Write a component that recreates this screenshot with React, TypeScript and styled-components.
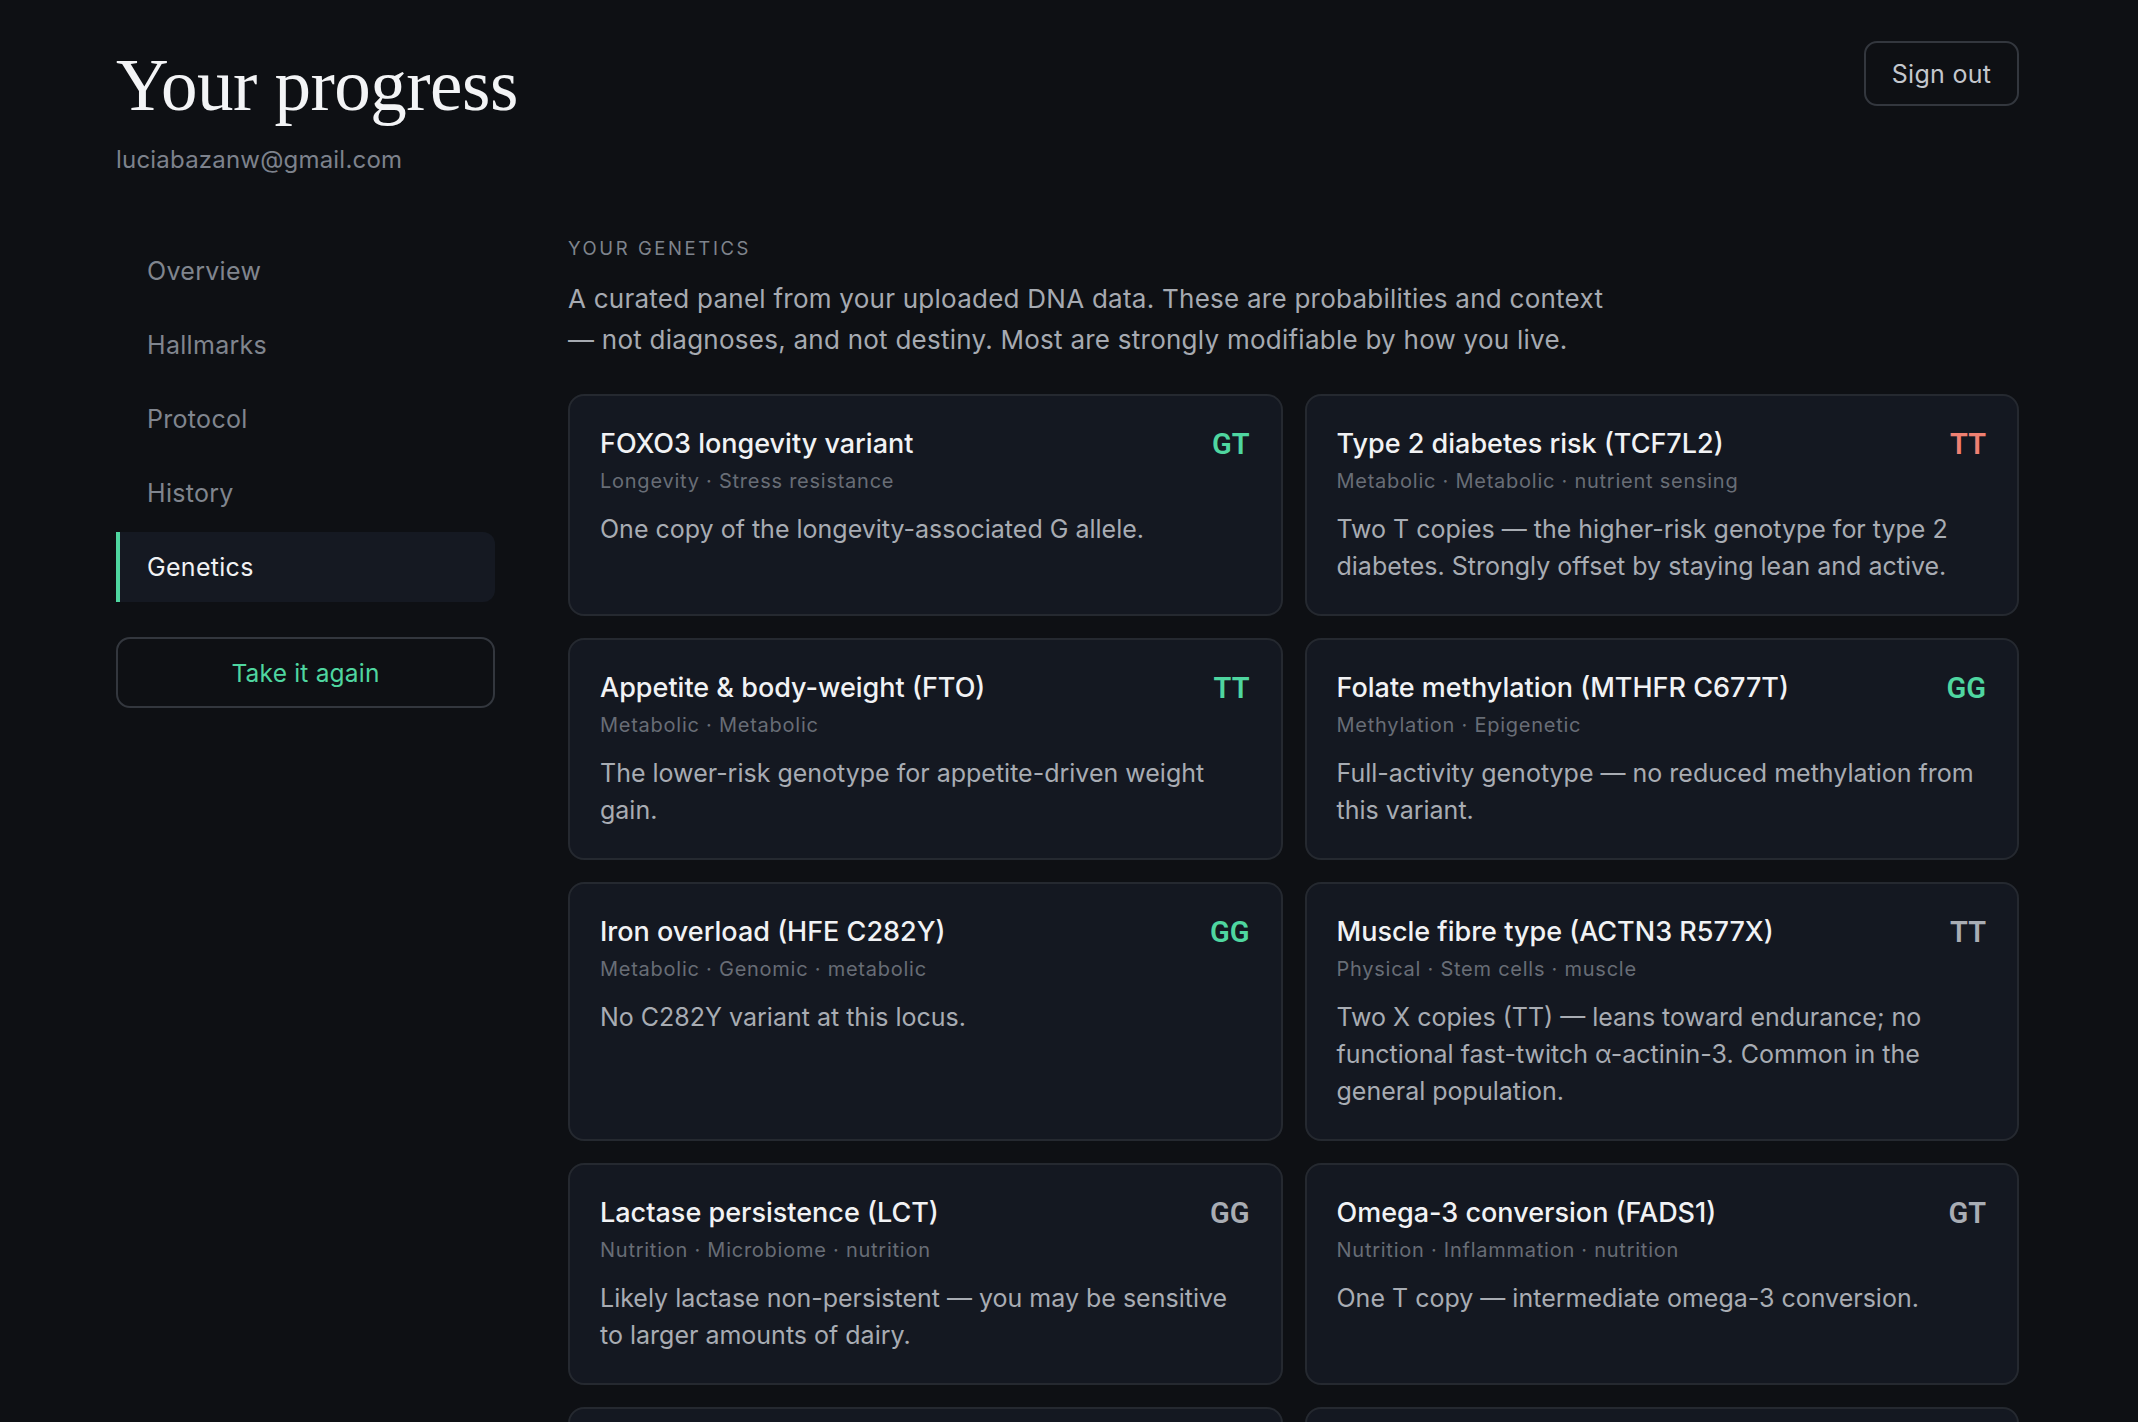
import React from "react";
import styled, { createGlobalStyle } from "styled-components";

const GlobalStyle = createGlobalStyle`
  html, body {
    margin: 0;
    padding: 0;
    background: #0e1014;
  }
  body {
    font-family: Inter, "Noto Sans", "Liberation Sans", sans-serif;
    color: #e9ebee;
    -webkit-font-smoothing: antialiased;
  }
  * { box-sizing: border-box; }
`;

const Page = styled.div`
  min-height: 100vh;
  padding: 41px 119px 60px 116px;
`;

const Header = styled.header`
  display: flex;
  justify-content: space-between;
  align-items: flex-start;
`;

const TitleBlock = styled.div`
  display: flex;
  flex-direction: column;
  padding-top: 9px;
`;

const Title = styled.h1`
  margin: 0;
  font-family: "Liberation Serif", "DejaVu Serif", serif;
  font-weight: 400;
  font-size: 73px;
  line-height: 72px;
  letter-spacing: -0.5px;
  color: #f3f4f6;
`;

const Email = styled.div`
  margin-top: 23px;
  font-size: 24px;
  line-height: 30px;
  letter-spacing: 0.2px;
  color: #7d828c;
`;

const OutlineButton = styled.button<{ $accent?: boolean }>`
  appearance: none;
  background: transparent;
  border: 2px solid #33373e;
  border-radius: 13px;
  font-family: Inter, "Noto Sans", sans-serif;
  font-size: 25px;
  letter-spacing: 0.3px;
  color: ${(p) => (p.$accent ? "#4fd6a0" : "#c3c7cd")};
  cursor: pointer;
`;

const SignOut = styled(OutlineButton)`
  width: 155px;
  height: 65px;
`;

const Body = styled.div`
  display: grid;
  grid-template-columns: 379px 1fr;
  column-gap: 73px;
  margin-top: 61px;
`;

const Sidebar = styled.aside`
  display: flex;
  flex-direction: column;
`;

const Nav = styled.nav`
  display: flex;
  flex-direction: column;
  gap: 4px;
`;

const NavItem = styled.a<{ $active?: boolean }>`
  display: flex;
  align-items: center;
  height: 70px;
  padding-left: 27px;
  border-left: 4px solid ${(p) => (p.$active ? "#4fd6a0" : "transparent")};
  border-radius: 0 12px 12px 0;
  background: ${(p) => (p.$active ? "#151922" : "transparent")};
  font-size: 25px;
  letter-spacing: 0.3px;
  color: ${(p) => (p.$active ? "#f1f2f4" : "#80858e")};
  text-decoration: none;
  cursor: pointer;
`;

const RetakeButton = styled(OutlineButton)`
  margin-top: 35px;
  height: 71px;
  width: 100%;
  border-radius: 14px;
  font-size: 24.5px;
  letter-spacing: 0.2px;
`;

const Main = styled.main`
  display: flex;
  flex-direction: column;
`;

const Eyebrow = styled.div`
  font-size: 18.5px;
  line-height: 24px;
  letter-spacing: 2.6px;
  text-transform: uppercase;
  color: #7f848d;
`;

const Intro = styled.p`
  margin: 18px 0 0;
  max-width: 1048px;
  font-size: 26px;
  line-height: 41px;
  letter-spacing: 0.25px;
  color: #a6aab1;
`;

const CardGrid = styled.div`
  margin-top: 34px;
  display: grid;
  grid-template-columns: 1fr 1fr;
  gap: 22px;
`;

const Card = styled.article`
  background: #141821;
  border: 2px solid #252930;
  border-radius: 16px;
  padding: 31px 31px 29px 30px;
`;

const CardHead = styled.div`
  display: flex;
  justify-content: space-between;
  align-items: center;
  gap: 16px;
`;

const CardTitle = styled.h3`
  margin: 0;
  font-size: 27px;
  line-height: 34px;
  font-weight: 500;
  color: #f1f2f4;
`;

type Tone = "good" | "risk" | "neutral";

const toneColor: Record<Tone, string> = {
  good: "#4fd6a0",
  risk: "#ef8072",
  neutral: "#a9adb4",
};

const Genotype = styled.span<{ $tone: Tone }>`
  font-family: Roboto, Inter, sans-serif;
  font-size: 29px;
  line-height: 34px;
  font-weight: 600;
  color: ${(p) => toneColor[p.$tone]};
`;

const Tags = styled.div`
  margin-top: 7px;
  font-size: 20px;
  line-height: 26px;
  letter-spacing: 0.75px;
  color: #686d76;
`;

const Description = styled.p`
  margin: 17px 0 0;
  font-size: 25px;
  line-height: 37px;
  color: #a8acb3;
`;

type Variant = {
  title: string;
  genotype: string;
  tone: Tone;
  tags: string[];
  text: string;
};

const variants: Variant[] = [
  {
    title: "FOXO3 longevity variant",
    genotype: "GT",
    tone: "good",
    tags: ["Longevity", "Stress resistance"],
    text: "One copy of the longevity-associated G allele.",
  },
  {
    title: "Type 2 diabetes risk (TCF7L2)",
    genotype: "TT",
    tone: "risk",
    tags: ["Metabolic", "Metabolic", "nutrient sensing"],
    text: "Two T copies — the higher-risk genotype for type 2 diabetes. Strongly offset by staying lean and active.",
  },
  {
    title: "Appetite & body-weight (FTO)",
    genotype: "TT",
    tone: "good",
    tags: ["Metabolic", "Metabolic"],
    text: "The lower-risk genotype for appetite-driven weight gain.",
  },
  {
    title: "Folate methylation (MTHFR C677T)",
    genotype: "GG",
    tone: "good",
    tags: ["Methylation", "Epigenetic"],
    text: "Full-activity genotype — no reduced methylation from this variant.",
  },
  {
    title: "Iron overload (HFE C282Y)",
    genotype: "GG",
    tone: "good",
    tags: ["Metabolic", "Genomic", "metabolic"],
    text: "No C282Y variant at this locus.",
  },
  {
    title: "Muscle fibre type (ACTN3 R577X)",
    genotype: "TT",
    tone: "neutral",
    tags: ["Physical", "Stem cells", "muscle"],
    text: "Two X copies (TT) — leans toward endurance; no functional fast-twitch α-actinin-3. Common in the general population.",
  },
  {
    title: "Lactase persistence (LCT)",
    genotype: "GG",
    tone: "neutral",
    tags: ["Nutrition", "Microbiome", "nutrition"],
    text: "Likely lactase non-persistent — you may be sensitive to larger amounts of dairy.",
  },
  {
    title: "Omega-3 conversion (FADS1)",
    genotype: "GT",
    tone: "neutral",
    tags: ["Nutrition", "Inflammation", "nutrition"],
    text: "One T copy — intermediate omega-3 conversion.",
  },
  {
    title: "Caffeine metabolism (CYP1A2)",
    genotype: "AA",
    tone: "good",
    tags: ["Metabolic", "Cardiovascular"],
    text: "Fast caffeine metaboliser — moderate coffee intake is well tolerated.",
  },
  {
    title: "Vitamin D binding (GC)",
    genotype: "AC",
    tone: "neutral",
    tags: ["Nutrition", "Immune", "nutrition"],
    text: "One lower-binding copy — worth checking vitamin D levels in winter.",
  },
];

const navItems = ["Overview", "Hallmarks", "Protocol", "History", "Genetics"];

export default function App() {
  return (
    <>
      <GlobalStyle />
      <Page>
        <Header>
          <TitleBlock>
            <Title>Your progress</Title>
            <Email>luciabazanw@gmail.com</Email>
          </TitleBlock>
          <SignOut>Sign out</SignOut>
        </Header>
        <Body>
          <Sidebar>
            <Nav>
              {navItems.map((item) => (
                <NavItem key={item} $active={item === "Genetics"}>
                  {item}
                </NavItem>
              ))}
            </Nav>
            <RetakeButton $accent>Take it again</RetakeButton>
          </Sidebar>
          <Main>
            <Eyebrow>Your genetics</Eyebrow>
            <Intro>
              A curated panel from your uploaded DNA data. These are probabilities and context
              — not diagnoses, and not destiny. Most are strongly modifiable by how you live.
            </Intro>
            <CardGrid>
              {variants.map((v) => (
                <Card key={v.title}>
                  <CardHead>
                    <CardTitle>{v.title}</CardTitle>
                    <Genotype $tone={v.tone}>{v.genotype}</Genotype>
                  </CardHead>
                  <Tags>{v.tags.join(" · ")}</Tags>
                  <Description>{v.text}</Description>
                </Card>
              ))}
            </CardGrid>
          </Main>
        </Body>
      </Page>
    </>
  );
}
